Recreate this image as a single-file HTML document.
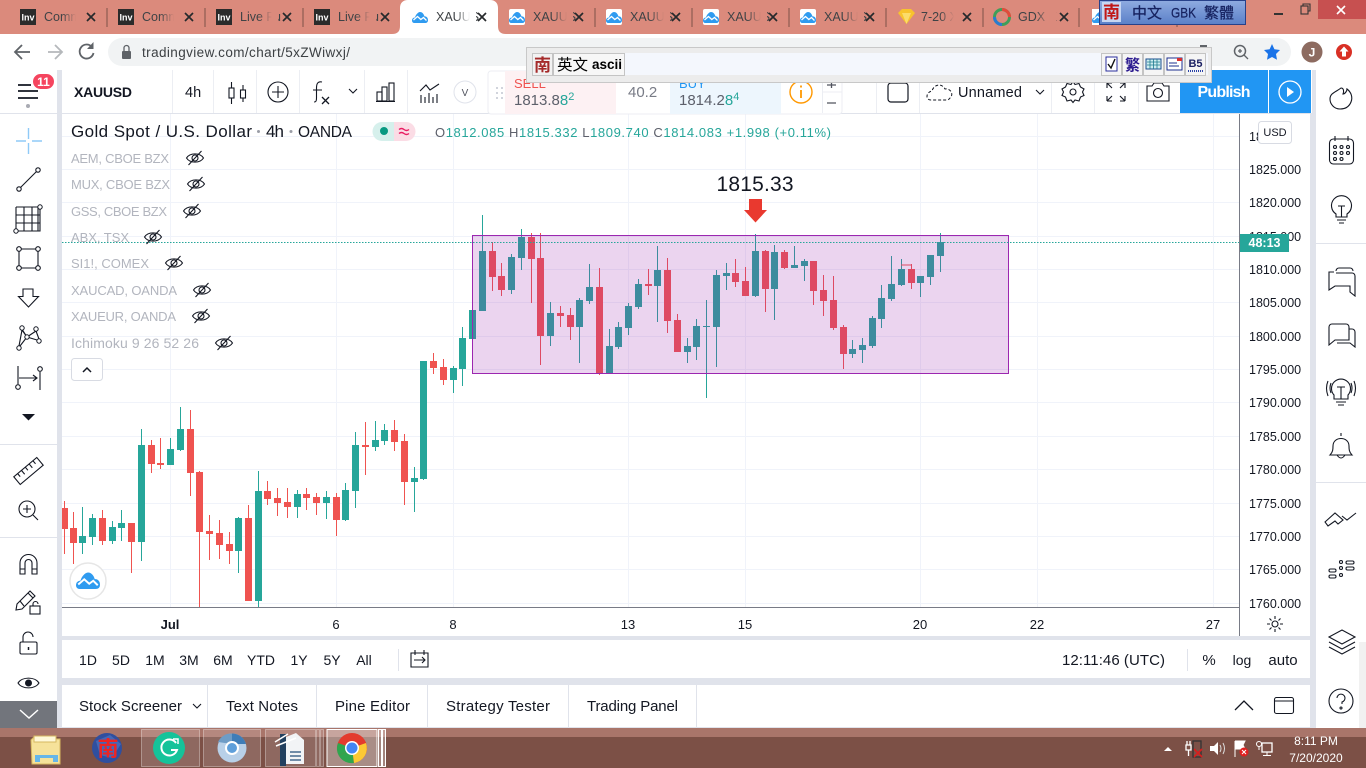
<!DOCTYPE html>
<html><head><meta charset="utf-8"><title>XAUUSD</title>
<style>
html,body{margin:0;padding:0;background:#fff;overflow:hidden;width:1366px;height:768px}
svg{display:block}
text{font-family:"Liberation Sans","Noto Sans CJK SC",sans-serif}
.t{font-size:12.5px;fill:#3f4346}
.h{font-size:13px;fill:#b2b5be}
.p{font-size:12.5px;fill:#131722}
.d{font-size:13px;fill:#131722;text-anchor:middle}
.tf{font-size:14px;fill:#131722;text-anchor:middle}
.k{font-size:15px;fill:#131722}
.c{fill:none;stroke:#131722;stroke-width:1.1}
</style></head><body>
<svg width="1366" height="768" viewBox="0 0 1366 768" xmlns="http://www.w3.org/2000/svg">
<defs>
<linearGradient id="fade"><stop offset="0" stop-color="#db8a7c" stop-opacity="0"/><stop offset=".7" stop-color="#db8a7c"/><stop offset="1" stop-color="#db8a7c"/></linearGradient>
<linearGradient id="fadew"><stop offset="0" stop-color="#fff" stop-opacity="0"/><stop offset=".7" stop-color="#fff"/><stop offset="1" stop-color="#fff"/></linearGradient>
<linearGradient id="ime" x1="0" y1="0" x2="0" y2="1"><stop offset="0" stop-color="#8fabe0"/><stop offset="1" stop-color="#5a80c8"/></linearGradient>
<clipPath id="ch"><rect x="62" y="114" width="1177" height="493"/></clipPath>
<g id="inv"><rect width="16" height="16" fill="#2b2b2b"/><text x="8" y="11.500" font-size="9" font-weight="700" fill="#fff" text-anchor="middle">Inv</text></g>
<g id="tv"><path d="M0 11.5C0 9 2 8.5 3 8.5 3.500 6 6 3 8 3 10.500 3 12 5.500 12.500 7.500 14 7 16 8.500 16 11 16 13 15 14 13 14H2.500C1 14 0 13 0 11.500Z" fill="#2f9bf0"/><path d="M1.500 11 5.500 7.500 8.800 10.500 11.500 8.500 14.500 11.500" fill="none" stroke="#fff" stroke-width="1.300"/></g>
<g id="x"><path d="M-4-4 4 4M4-4-4 4" stroke="#26292c" stroke-width="1.700"/></g>
<g id="eye"><path d="M-8.500 0C-5-5.500 5-5.500 8.500 0 5 5.500-5 5.500-8.500 0Z" class="c"/><circle r="3" class="c"/><path d="M-6.500 7 6.500-7" class="c"/></g>
</defs>

<!-- browser chrome -->
<rect width="1366" height="34" fill="#db8a7c"/>
<rect y="34" width="1366" height="36" fill="#fff"/>
<path d="M392 34C398 34 400 31 400 26V8C400 3 403 0 408 0H490C495 0 498 3 498 8V26C498 31 500 34 506 34Z" fill="#fff"/>

<use href="#inv" x="20" y="9"/><text class="t" x="44" y="21">Comm</text><rect x="62" y="10" width="20" height="16" fill="url(#fade)"/><use href="#x" x="91" y="17"/>
<path d="M107 8V27M205 8V27M303 8V27M595 8V27M692 8V27M789 8V27M886 8V27M983 8V27M1079 8V27M1177 8V27" stroke="#7d5148"/>
<use href="#inv" x="118" y="9"/><text class="t" x="142" y="21">Comm</text><rect x="160" y="10" width="20" height="16" fill="url(#fade)"/><use href="#x" x="189" y="17"/>
<use href="#inv" x="216" y="9"/><text class="t" x="240" y="21">Live Fu</text><rect x="258" y="10" width="20" height="16" fill="url(#fade)"/><use href="#x" x="287" y="17"/>
<use href="#inv" x="314" y="9"/><text class="t" x="338" y="21">Live Fu</text><rect x="356" y="10" width="20" height="16" fill="url(#fade)"/><use href="#x" x="385" y="17"/>
<use href="#tv" x="412" y="9"/><text class="t" x="436" y="21">XAUUS</text><rect x="456" y="10" width="20" height="16" fill="url(#fadew)"/><use href="#x" x="482" y="17"/>

<rect x="509" y="9" width="16" height="16" rx="2" fill="#fff"/><use href="#tv" x="509" y="9"/><text class="t" x="533" y="21">XAUUS</text><rect x="553" y="10" width="20" height="16" fill="url(#fade)"/><use href="#x" x="579" y="17"/>
<rect x="606" y="9" width="16" height="16" rx="2" fill="#fff"/><use href="#tv" x="606" y="9"/><text class="t" x="630" y="21">XAUUS</text><rect x="650" y="10" width="20" height="16" fill="url(#fade)"/><use href="#x" x="676" y="17"/>
<rect x="703" y="9" width="16" height="16" rx="2" fill="#fff"/><use href="#tv" x="703" y="9"/><text class="t" x="727" y="21">XAUUS</text><rect x="747" y="10" width="20" height="16" fill="url(#fade)"/><use href="#x" x="773" y="17"/>
<rect x="800" y="9" width="16" height="16" rx="2" fill="#fff"/><use href="#tv" x="800" y="9"/><text class="t" x="824" y="21">XAUUS</text><rect x="844" y="10" width="20" height="16" fill="url(#fade)"/><use href="#x" x="870" y="17"/>
<path d="M898 13 902 9H911L915 13 906.500 24Z" fill="#f8c32c"/><path d="M902 13H911L906.500 24Z" fill="#fbdc6a"/>
<text class="t" x="921" y="21">7-20 X</text><rect x="940" y="10" width="20" height="16" fill="url(#fade)"/><use href="#x" x="967" y="17"/>
<circle cx="1002" cy="17" r="7.500" fill="none" stroke="#3f9e5a" stroke-width="3"/><path d="M1002 9.500A7.500 7.500 0 0 1 1009.500 17" fill="none" stroke="#e24b3b" stroke-width="3"/><path d="M1002 24.500A7.500 7.500 0 0 1 994.500 17" fill="none" stroke="#2b7bd0" stroke-width="3"/>
<text class="t" x="1018" y="21">GDX E</text><rect x="1036" y="10" width="20" height="16" fill="url(#fade)"/><use href="#x" x="1064" y="17"/>
<rect x="1092" y="9" width="10" height="16" fill="#fff"/><use href="#tv" x="1092" y="9"/>

<!-- window controls -->
<rect x="1318" y="0" width="48" height="19" fill="#c75050"/>
<path d="M1337 6 1345 14M1345 6 1337 14" stroke="#fff" stroke-width="1.600"/>
<rect x="1274" y="13" width="9" height="2" fill="#333"/>
<rect x="1301" y="6" width="7" height="8" fill="none" stroke="#333" stroke-width="1.100"/><path d="M1303 6V4H1310V11H1308" fill="none" stroke="#333" stroke-width="1.100"/>

<!-- IME status -->
<rect x="1099.500" y=".5" width="146" height="24" fill="url(#ime)" stroke="#27418a"/>
<rect x="1102" y="2" width="19" height="20" fill="#c6d6f2"/>
<text x="1111.500" y="18" font-size="17" font-weight="700" fill="#c01818" text-anchor="middle">南</text>
<text x="1132" y="18" font-size="15" fill="#16225f" stroke="#16225f" stroke-width=".25">中文</text>
<text x="1171" y="17.500" font-size="14" fill="#16225f" textLength="25" lengthAdjust="spacingAndGlyphs" stroke="#16225f" stroke-width=".25">GBK</text>
<text x="1204" y="18" font-size="15" fill="#16225f" stroke="#16225f" stroke-width=".25">繁體</text>

<!-- nav -->
<path d="M30 52H16M22 45 15 52 22 59" fill="none" stroke="#5f6368" stroke-width="1.800"/>
<path d="M62 52H48M55 45 62 52 55 59" fill="none" stroke="#b5b8bb" stroke-width="1.800"/>
<path d="M92 47A7 7 0 1 0 93.500 53" fill="none" stroke="#5f6368" stroke-width="1.800"/><path d="M93.500 42V49H87Z" fill="#5f6368"/>
<rect x="108" y="38" width="1183" height="28" rx="14" fill="#f1f3f4"/>
<rect x="122" y="51" width="9" height="8" rx="1" fill="#5f6368"/><path d="M124 51V48A2.500 2.500 0 0 1 129 48V51" fill="none" stroke="#5f6368" stroke-width="1.300"/>
<text x="142" y="57" font-size="13.500" fill="#3c4043" textLength="208">tradingview.com/chart/5xZWiwxj/</text>
<rect x="1200" y="45" width="7" height="2" fill="#5f6368"/>
<circle cx="1240" cy="51" r="5.500" fill="none" stroke="#5f6368" stroke-width="1.500"/><path d="M1244 55 1248 59M1238 51H1242M1240 49V53" stroke="#5f6368" stroke-width="1.300"/>
<path d="M1272 44 1274.400 49.300 1280 50 1276 54 1277 59.800 1272 57 1267 59.800 1268 54 1264 50 1269.600 49.300Z" fill="#1a73e8"/>
<circle cx="1312" cy="52" r="10.500" fill="#8d6b60"/><text x="1312" y="56.500" font-size="12" font-weight="700" fill="#fff" text-anchor="middle">J</text>
<circle cx="1344" cy="52" r="8" fill="#d93025"/><path d="M1344 46.500 1348.500 51.500H1346V56.500H1342V51.500H1339.500Z" fill="#fff"/>

<!-- app background -->
<rect y="70" width="1366" height="658" fill="#e0e3eb"/>
<rect x="0" y="70" width="57" height="631" fill="#fff"/>
<rect x="62" y="70" width="1250" height="43" fill="#fff"/>
<rect x="62" y="114" width="1248" height="522" fill="#fff"/>
<rect x="62" y="640" width="1248" height="38" fill="#fff"/>
<rect x="62" y="685" width="1248" height="42" fill="#fff"/>
<rect x="1316" y="70" width="50" height="658" fill="#fff"/>
<rect x="1359" y="642" width="7" height="86" fill="#f1f1f1"/>

<!-- chart grid -->
<path d="M62 136.500H1239M62 169.500H1239M62 202.500H1239M62 236.500H1239M62 269.500H1239M62 302.500H1239M62 336.500H1239M62 369.500H1239M62 402.500H1239M62 436.500H1239M62 469.500H1239M62 503.500H1239M62 536.500H1239M62 569.500H1239M62 603.500H1239M170.500 114V607M336.500 114V607M453.500 114V607M628.500 114V607M745.500 114V607M920.500 114V607M1037.500 114V607M1213.500 114V607" stroke="#f0f3fa" fill="none"/>

<!-- candles -->
<g clip-path="url(#ch)" shape-rendering="crispEdges" fill="none">
<path stroke="#26a69a" stroke-width="1" d="M462.500 327V386M472.500 310V339M482.500 215V311M511.500 254V294M521.500 229V270M550.500 302V346M579.500 298V363M589.500 264V304M609.500 329V373M618.500 322V349M628.500 303V335M638.500 279V309M657.500 246V322M687.500 338V363M696.500 319V360M706.500 300V398M716.500 270V367M726.500 263V290M755.500 234V297M774.500 245V320M794.500 246V268M804.500 259V281M852.500 340V358M862.500 338V363M872.500 316V348M881.500 285V328M891.500 256V301M901.500 259V286M920.500 276V297M930.500 255V285M940.500 233V272M82.500 507V554M92.500 514V545M112.500 521V544M121.500 510V541M141.500 429V561M170.500 438V465M180.500 407V451M238.500 517V573M258.500 471V607M297.500 490V518M326.500 491V519M345.500 483V521M355.500 432V508M375.500 421V451M384.500 424V445M414.500 467V512M423.500 361V480M453.500 366V393"/>
<path stroke="#26a69a" stroke-width="7" d="M462.500 338V369M472.500 310V339M482.500 251V311M511.500 257V290M521.500 237V258M550.500 313V336M579.500 300V327M589.500 287V301M609.500 346V373M618.500 327V347M628.500 306V328M638.500 284V307M657.500 270V286M687.500 346V352M696.500 326V347M706.500 326V327M716.500 275V327M726.500 273V276M755.500 251V296M774.500 252V289M794.500 265V268M804.500 261V266M852.500 349V354M862.500 345V350M872.500 318V346M881.500 298V319M891.500 284V299M901.500 269V285M920.500 276V283M930.500 255V277M940.500 242V256M82.500 536V543M92.500 518V537M112.500 527V541M121.500 523V528M141.500 445V542M170.500 449V465M180.500 429V450M238.500 518V551M258.500 491V601M297.500 494V507M326.500 497V503M345.500 490V520M355.500 445V491M375.500 440V447M384.500 430V441M414.500 478V482M423.500 361V479M453.500 368V380"/>
<path stroke="#ef5350" stroke-width="1" d="M64.500 501V554M73.500 512V564M102.500 510V545M131.500 523V573M151.500 440V473M160.500 438V469M190.500 410V496M199.500 471V607M209.500 515V560M219.500 520V559M229.500 532V564M248.500 505V601M267.500 481V505M277.500 488V516M287.500 488V518M306.500 488V510M316.500 493V515M336.500 493V536M365.500 422V475M394.500 420V451M404.500 434V505M433.500 353V374M443.500 359V385M492.500 242V291M501.500 263V296M531.500 233V303M540.500 233V365M560.500 306V327M570.500 308V340M599.500 268V375M648.500 269V295M667.500 258V333M677.500 314V352M735.500 259V287M745.500 267V296M765.500 250V312M784.500 250V269M813.500 261V305M823.500 275V316M833.500 276V330M843.500 325V369M911.500 264V289"/>
<path stroke="#ef5350" stroke-width="7" d="M64.500 508V529M73.500 528V543M102.500 518V541M131.500 523V542M151.500 445V464M160.500 463V465M190.500 429V473M199.500 472V532M209.500 531V534M219.500 533V545M229.500 544V551M248.500 518V601M267.500 491V499M277.500 498V503M287.500 502V507M306.500 494V498M316.500 497V503M336.500 497V520M365.500 445V447M394.500 430V442M404.500 441V482M433.500 361V368M443.500 367V380M492.500 251V277M501.500 276V290M531.500 237V259M540.500 258V336M560.500 313V316M570.500 315V327M599.500 287V374M648.500 284V286M667.500 270V321M677.500 320V352M735.500 273V282M745.500 281V296M765.500 251V289M784.500 252V268M813.500 261V291M823.500 290V301M833.500 300V328M843.500 327V354M911.500 269V283"/>
<path d="M901 265H911" stroke="#ef5350"/>
</g>
<!-- box -->
<rect x="472.500" y="235.500" width="536" height="138" fill="#9c27b0" fill-opacity=".2" stroke="#9c27b0"/>
<path d="M62 242.500H1239" stroke="#26a69a" stroke-dasharray="1.500 1.500"/>
<!-- annotation -->
<text x="755" y="191" font-size="21" fill="#131722" text-anchor="middle" textLength="77">1815.33</text>
<path d="M749 199H762V210H767L755.500 222.500 744 210H749Z" fill="#e9392f"/>

<!-- price scale -->
<path d="M1239.500 114V636M62 607.500H1239" stroke="#787b86"/>
<g class="p"><text class="p" x="1249" y="174">1825.000</text><text class="p" x="1249" y="207">1820.000</text><text class="p" x="1249" y="241">1815.000</text><text class="p" x="1249" y="274">1810.000</text><text class="p" x="1249" y="307">1805.000</text><text class="p" x="1249" y="341">1800.000</text><text class="p" x="1249" y="374">1795.000</text><text class="p" x="1249" y="407">1790.000</text><text class="p" x="1249" y="441">1785.000</text><text class="p" x="1249" y="474">1780.000</text><text class="p" x="1249" y="508">1775.000</text><text class="p" x="1249" y="541">1770.000</text><text class="p" x="1249" y="574">1765.000</text><text class="p" x="1249" y="608">1760.000</text><text class="p" x="1249" y="141">18</text></g>
<rect x="1240" y="234" width="49" height="18" fill="#26a69a"/>
<text x="1264.500" y="247" font-size="12.500" font-weight="700" fill="#fff" text-anchor="middle">48:13</text>
<rect x="1258.500" y="121.500" width="33" height="22" rx="3" fill="#fff" stroke="#d8dbe3"/>
<text x="1275" y="136" font-size="11" fill="#131722" text-anchor="middle">USD</text>

<!-- legend -->
<text x="71" y="137" font-size="17" fill="#131722" textLength="181">Gold Spot / U.S. Dollar</text>
<circle cx="258.500" cy="131.500" r="1.500" fill="#9a9da6"/>
<text x="266" y="137" font-size="17" fill="#131722" textLength="18">4h</text>
<circle cx="291" cy="131.500" r="1.500" fill="#9a9da6"/>
<text x="298" y="137" font-size="15.500" fill="#131722" textLength="54">OANDA</text>
<path d="M382 122H394V141H382A9.500 9.500 0 0 1 382 122Z" fill="#d6f0ec"/><path d="M394 122H406A9.500 9.500 0 0 1 406 141H394Z" fill="#fbdce5"/>
<circle cx="384" cy="131" r="4" fill="#089981"/>
<path d="M399 129.500Q401.500 127.500 404 129.500T409 129.500M399 133.500Q401.500 131.500 404 133.500T409 133.500" fill="none" stroke="#e91e63" stroke-width="1.400"/>
<text x="435" y="137" font-size="13" fill="#26a69a" textLength="396"><tspan fill="#5d606b">O</tspan>1812.085 <tspan fill="#5d606b">H</tspan>1815.332 <tspan fill="#5d606b">L</tspan>1809.740 <tspan fill="#5d606b">C</tspan>1814.083 +1.998 (+0.11%)</text>
<text class="h" x="71" y="163" textLength="98">AEM, CBOE BZX</text><use href="#eye" x="195" y="158"/>
<text class="h" x="71" y="189" textLength="99">MUX, CBOE BZX</text><use href="#eye" x="196" y="184"/>
<text class="h" x="71" y="216" textLength="96">GSS, CBOE BZX</text><use href="#eye" x="192" y="211"/>
<text class="h" x="71" y="242" textLength="58">ABX, TSX</text><use href="#eye" x="153" y="237"/>
<text class="h" x="71" y="268" textLength="78">SI1!, COMEX</text><use href="#eye" x="174" y="263"/>
<text class="h" x="71" y="295" textLength="106">XAUCAD, OANDA</text><use href="#eye" x="202" y="290"/>
<text class="h" x="71" y="321" textLength="105">XAUEUR, OANDA</text><use href="#eye" x="201" y="316"/>
<text class="h" x="71" y="348" style="font-size:14px" textLength="128">Ichimoku 9 26 52 26</text><use href="#eye" x="224" y="343"/>
<rect x="71.500" y="358.500" width="31" height="22" rx="3" fill="#fff" stroke="#d8dbe3"/>
<path d="M83 372 87 368 91 372" fill="none" stroke="#131722" stroke-width="1.500"/>

<!-- watermark -->
<circle cx="88" cy="581" r="18" fill="#fff" stroke="#e6e6e6" stroke-width="1.500"/>
<g transform="translate(76 571) scale(1.500)"><use href="#tv" y="-2"/></g>

<!-- date axis -->
<text class="d" x="170" y="629" font-weight="700">Jul</text><text class="d" x="336" y="629">6</text><text class="d" x="453" y="629">8</text><text class="d" x="628" y="629">13</text><text class="d" x="745" y="629">15</text><text class="d" x="920" y="629">20</text><text class="d" x="1037" y="629">22</text><text class="d" x="1213" y="629">27</text>
<circle cx="1275" cy="624" r="3" class="c"/><path d="M1275 616V619M1275 629V632M1267 624H1270M1280 624H1283M1269.500 618.500 1271.500 620.500M1278.500 627.500 1280.500 629.500M1280.500 618.500 1278.500 620.500M1271.500 627.500 1269.500 629.500" class="c"/>

<!-- timeframes -->
<g><text class="tf" x="88" y="665">1D</text><text class="tf" x="121" y="665">5D</text><text class="tf" x="155" y="665">1M</text><text class="tf" x="189" y="665">3M</text><text class="tf" x="223" y="665">6M</text><text class="tf" x="261" y="665">YTD</text><text class="tf" x="299" y="665">1Y</text><text class="tf" x="332" y="665">5Y</text><text class="tf" x="364" y="665">All</text></g>
<path d="M398.500 649V671M1187.500 649V671" stroke="#e0e3eb"/>
<path d="M411 653H428V667H411ZM415 650V655M424 650V655M414 660H425M422 657 425 660 422 663" class="c"/>
<text x="1062" y="665" font-size="15" fill="#131722" textLength="103">12:11:46 (UTC)</text>
<text class="tf" x="1209" y="665" style="font-size:15px">%</text><text class="tf" x="1242" y="665">log</text><text class="tf" x="1283" y="665" style="font-size:15px">auto</text>

<!-- bottom panel tabs -->
<path d="M207.500 685V727M316.500 685V727M427.500 685V727M568.500 685V727M696.500 685V727" stroke="#e0e3eb"/>
<text class="k" x="79" y="711" textLength="103">Stock Screener</text><path d="M193 704 197 708 201 704" class="c"/>
<text class="k" x="226" y="711" textLength="72">Text Notes</text>
<text class="k" x="335" y="711" textLength="75">Pine Editor</text>
<text class="k" x="446" y="711" textLength="104">Strategy Tester</text>
<text class="k" x="587" y="711" textLength="91">Trading Panel</text>
<path d="M1235 710 1244 701 1253 710" fill="none" stroke="#131722" stroke-width="1.300"/>
<rect x="1274.500" y="697.500" width="19" height="16" rx="2" class="c"/><path d="M1275 701H1293" class="c"/>

<!-- top toolbar -->
<path d="M172.500 70V113M213.500 70V113M256.500 70V113M299.500 70V113M364.500 70V113M407.500 70V113M876.500 70V113M919.500 70V113M1051.500 70V113M1094.500 70V113M1138.500 70V113" stroke="#eceef3"/>
<path d="M0 113.500H57M62 113.500H1310" stroke="#e0e3eb"/>
<text x="74" y="97" font-size="14" font-weight="700" fill="#131722" textLength="58">XAUUSD</text>
<text x="185" y="97" font-size="14.500" fill="#131722">4h</text>
<path d="M231.500 82V88M231.500 98V104M243 85V90M243 98V102" class="c"/><rect x="229" y="88" width="5" height="10" class="c"/><rect x="240.500" y="90" width="5" height="8" class="c"/>
<circle cx="278" cy="92" r="10" class="c"/><path d="M278 86V98M272 92H284" class="c"/>
<path d="M322 82C317 81 316.500 85 316.500 88V98C316.500 101 316 102 314 102M313 90H322" class="c"/><path d="M322 97 329 104M329 97 322 104" stroke="#131722" stroke-width="1.300"/>
<path d="M349 89 353 93 357 89" class="c"/>
<rect x="377" y="92" width="5" height="9" class="c"/><rect x="382" y="87" width="5" height="14" class="c"/><rect x="389" y="83" width="5" height="18" class="c"/><path d="M376 101.500H395" class="c"/>
<path d="M420 91 426 85 430 90 439 84M421 103V95M425 103V97M429 103V93M433 103V97M437 103V94" class="c"/>
<circle cx="465" cy="92" r="11" fill="#fff" stroke="#e0e3eb"/><text x="465" y="96" font-size="10" fill="#50535e" text-anchor="middle">V</text>
<!-- hamburger -->
<path d="M18 85H31M18 91H38M18 98H38" stroke="#131722" stroke-width="1.800"/><circle cx="28" cy="106" r="2" fill="#a9abb3"/>
<rect x="33" y="74" width="21" height="15" rx="7.500" fill="#f5455f"/><text x="43.500" y="86" font-size="12" font-weight="700" fill="#fff" text-anchor="middle">11</text>

<!-- trade box -->
<rect x="488" y="71" width="354" height="43" rx="3" fill="#fff" stroke="#eceef3"/>
<rect x="505" y="71" width="111" height="43" fill="#fdf1f3"/><rect x="670" y="71" width="111" height="43" fill="#edf6fd"/>
<path d="M496 88H498M501 88H503M496 93H498M501 93H503M496 98H498M501 98H503" stroke="#d1d4dc" stroke-width="2"/>
<text x="514" y="88" font-size="13" fill="#ef5350">SELL</text>
<text x="514" y="105" font-size="15" fill="#5d606b">1813.8<tspan fill="#26a69a">8</tspan><tspan fill="#26a69a" font-size="11" dy="-5">2</tspan></text>
<text x="628" y="97" font-size="15" fill="#787b86">40.2</text>
<text x="679" y="88" font-size="13" fill="#2196f3">BUY</text>
<text x="679" y="105" font-size="15" fill="#5d606b">1814.2<tspan fill="#26a69a">8</tspan><tspan fill="#26a69a" font-size="11" dy="-5">4</tspan></text>
<circle cx="801" cy="92" r="11" fill="none" stroke="#ff9800" stroke-width="1.400"/><path d="M801 90V98M801 85.500V87.500" stroke="#ff9800" stroke-width="1.800"/>
<path d="M822.500 71V113M823 92H842" stroke="#eceef3"/><path d="M827 103H836M827 85H836M831.500 83V88" stroke="#50535e" stroke-width="1.300"/>

<rect x="888" y="83" width="20" height="19" rx="3" fill="none" stroke="#131722" stroke-width="1.200"/>
<path d="M931 100C925 100 926 92 932 91 934 84 942 83 945 89 951 88 954 95 950 98 949 99.500 948 100 946 100Z" fill="none" stroke="#131722" stroke-dasharray="3 2"/>
<text x="958" y="97" font-size="14.500" fill="#131722" textLength="64">Unnamed</text>
<path d="M1036 90 1040 94 1044 90" class="c"/>
<path d="M1073 81.500 1075 84.500 1079 83.500 1080.500 87 1084 89 1082.500 92 1084 95.500 1080.500 97 1079 101 1075 100 1073 102.500 1071 100 1067 101 1065.500 97 1062 95.500 1063.500 92 1062 89 1065.500 87 1067 83.500 1071 84.500Z" class="c"/><circle cx="1073" cy="92" r="3" class="c"/>
<path d="M1107 83H1112M1107 83V88M1107 83 1112 88M1125 83H1120M1125 83V88M1125 83 1120 88M1107 101H1112M1107 101V96M1107 101 1112 96M1125 101H1120M1125 101V96M1125 101 1120 96" class="c"/>
<path d="M1147 86H1152L1154 83H1162L1164 86H1169V101H1147Z" class="c"/><circle cx="1158" cy="93" r="4.500" class="c"/>
<rect x="1180" y="70" width="88" height="43" fill="#2196f3"/><rect x="1269" y="70" width="42" height="43" fill="#2196f3"/>
<text x="1224" y="97" font-size="16" font-weight="700" fill="#fff" text-anchor="middle" textLength="53">Publish</text>
<circle cx="1290" cy="92" r="11" fill="none" stroke="#fff" stroke-width="1.300"/><path d="M1287 87 1294 92 1287 97Z" fill="#fff"/>

<!-- IME bar -->
<rect x="526.500" y="47.500" width="685" height="35" fill="#ececec" stroke="#c8c8c8"/>
<rect x="532" y="53" width="676" height="22" fill="#f4f7fd"/>
<rect x="532.500" y="53.500" width="20" height="22" fill="#f2f2f2" stroke="#c4c4c4"/>
<text x="542.500" y="71" font-size="17" font-weight="700" fill="#a52a2a" text-anchor="middle">南</text>
<rect x="553.500" y="53.500" width="71" height="22" fill="#f7f7f7" stroke="#c4c4c4"/>
<text x="557" y="70" font-size="15.500" fill="#000">英文</text><text x="592" y="69" font-size="13.500" font-weight="700" fill="#000">ascii</text>
<g stroke="#c4c4c4" fill="#f5f5f5"><rect x="1101.500" y="53.500" width="20" height="22"/><rect x="1122.500" y="53.500" width="20" height="22"/><rect x="1143.500" y="53.500" width="20" height="22"/><rect x="1164.500" y="53.500" width="20" height="22"/><rect x="1185.500" y="53.500" width="20" height="22"/></g>
<rect x="1106" y="57" width="11" height="14" fill="#fff" stroke="#2b2f9e"/><path d="M1108 64 1111 68 1115 59" fill="none" stroke="#111" stroke-width="1.400"/>
<text x="1132.500" y="70" font-size="15" font-weight="700" fill="#2b1a8f" text-anchor="middle">繁</text>
<rect x="1146" y="59" width="15" height="10" fill="#cfeef0" stroke="#1d4f8f"/><path d="M1147 62H1160M1147 65H1160M1150 59V69M1153.500 59V69M1157 59V69" stroke="#1f7b8f" stroke-width=".8"/>
<rect x="1167" y="58" width="15" height="12" fill="#fff" stroke="#1d2f8f"/><rect x="1177" y="58" width="5" height="3" fill="#d83030"/><path d="M1169 63H1177M1169 66H1179" stroke="#1d2f8f"/>
<text x="1195.500" y="67" font-size="11" font-weight="700" fill="#1d2264" text-anchor="middle">B5</text><path d="M1188 71H1203" stroke="#2c44a8" stroke-width="2" stroke-dasharray="1 1"/>

<!-- left toolbar icons -->
<path d="M0 113.500H57M0 444.500H57M0 537.500H57" stroke="#e0e3eb"/>
<path d="M28.500 128V139M28.500 143V154M16 141H26M32 141H42" stroke="#8fcaf7" stroke-width="1.400"/>
<path d="M20.500 187.500 36.500 171.500" class="c"/><circle cx="19" cy="189" r="2.200" class="c"/><circle cx="38" cy="170" r="2.200" class="c"/>
<path d="M16 207H38V231M18 231H40V209M16 207V229M24 207V231M32 207V231M16 215H40M16 223H40" class="c"/><circle cx="40" cy="207" r="2.200" fill="#fff" stroke="#131722"/><circle cx="16" cy="231" r="2.200" fill="#fff" stroke="#131722"/>
<path d="M21 249H36M21 268H36M19 251V266M38 251V266" class="c"/><circle cx="19" cy="249" r="2.300" class="c"/><circle cx="38" cy="249" r="2.300" class="c"/><circle cx="19" cy="268" r="2.300" class="c"/><circle cx="38" cy="268" r="2.300" class="c"/>
<path d="M23 289H33V296.500H38.500L28.500 307 18.500 296.500H23Z" class="c"/>
<path d="M20 346 27 337 22 330 19 346M27 337 36 331 39 339M27 337 37 340M22.500 330 27 337" class="c"/><circle cx="22" cy="328" r="2.200" fill="#fff" stroke="#131722"/><circle cx="36" cy="329" r="2.200" fill="#fff" stroke="#131722"/><circle cx="27" cy="337" r="2.200" fill="#fff" stroke="#131722"/><circle cx="39" cy="341" r="2.200" fill="#fff" stroke="#131722"/><circle cx="19" cy="348" r="2.200" fill="#fff" stroke="#131722"/>
<path d="M18 366V384M40 372V390M19 378H37M33 375 37 378 33 381" class="c"/><circle cx="18" cy="387" r="2.300" class="c"/><circle cx="40" cy="369" r="2.300" class="c"/>
<path d="M22 414H35L28.500 420.500Z" fill="#131722"/>
<g transform="translate(28.500 471) rotate(-40)"><rect x="-15" y="-5" width="30" height="10" class="c"/><path d="M-10-5V-1M-5-5V0M0-5V-1M5-5V0M10-5V-1" class="c"/></g>
<circle cx="27" cy="509" r="8" class="c"/><path d="M27 505V513M23 509H31M33 515 38 520" class="c"/>
<path d="M20 574V563A8.500 8.500 0 0 1 37 563V574H32V563A3.500 3.500 0 0 0 25 563V574ZM20 569H25M32 569H37" class="c"/>
<path d="M17 604 30 591 35 596 22 609 16 610ZM28 593 33 598M20 601 24 606" class="c"/><rect x="30" y="606" width="10" height="8" class="c"/><path d="M33 606V604A2.500 2.500 0 0 1 38 604" class="c"/>
<rect x="20" y="642" width="17" height="12" rx="1.500" class="c"/><path d="M23 642V637A5 5 0 0 1 33 637" class="c"/><path d="M28.500 647V650" stroke="#131722" stroke-width="1.500"/>
<path d="M18 683C22 676.500 35 676.500 39 683 35 689.500 22 689.500 18 683Z" class="c"/><circle cx="28.500" cy="683" r="3.500" fill="#131722"/>
<rect y="701" width="57" height="27" fill="#72757c"/><path d="M20 710 29 718 38 710" fill="none" stroke="#fff" stroke-width="1.500"/>

<!-- right toolbar -->
<path d="M1316 243.500H1366M1316 482.500H1366" stroke="#e0e3eb"/>
<path d="M1341 88C1344 88 1344 92 1343 94 1345 94 1347 91 1347 89 1351 92 1353 97 1351 102 1349 107 1345 109 1340 109 1334 109 1330 104 1330 99 1330 93 1336 92 1341 88Z" class="c"/>
<rect x="1329.500" y="139" width="24" height="25" rx="4" class="c"/><path d="M1335 136V141M1348 136V141" class="c"/><g class="c"><circle cx="1335" cy="147" r="1.500"/><circle cx="1341.500" cy="147" r="1.500"/><circle cx="1348" cy="147" r="1.500"/><circle cx="1335" cy="153" r="1.500"/><circle cx="1341.500" cy="153" r="1.500"/><circle cx="1348" cy="153" r="1.500"/><circle cx="1335" cy="159" r="1.500"/><circle cx="1341.500" cy="159" r="1.500"/></g>
<path d="M1336 214A10 10 0 1 1 1347 214V217H1336ZM1338 206H1345M1341.500 206V217M1337 220H1346M1339 223H1344" class="c"/>
<path d="M1334 272H1329V290L1335 286H1350V292L1355 296V276A3 3 0 0 0 1352 273H1336M1336 271A3 3 0 0 1 1339 268H1350A3 3 0 0 1 1353 271" class="c"/>
<path d="M1329 327A3 3 0 0 1 1332 324H1346A3 3 0 0 1 1349 327V340H1335L1329 345ZM1349 329H1352A3 3 0 0 1 1355 332V347L1350 343H1337" class="c"/>
<path d="M1334 395A9.500 9.500 0 1 1 1348 395V399H1334ZM1337 387H1345M1341 387V399M1336 402H1346M1338 405H1344M1328 381Q1325 388 1328 396M1331 383Q1329 388 1331 393M1354 381Q1357 388 1354 396M1351 383Q1353 388 1351 393" class="c"/>
<path d="M1330 455C1333 452 1333 449 1333 446 1333 436 1349 436 1349 446 1349 449 1349 452 1352 455ZM1341 436V433M1337 455Q1341 461 1345 455" class="c"/>
<path d="M1325 522 1335 513 1343 520 1338 524 1335 521 1328 526ZM1342 516 1347 520 1356 513" class="c"/>
<g class="c"><rect x="1329" y="575" width="7" height="3" rx="1.500"/><rect x="1329" y="569" width="7" height="3" rx="1.500"/><circle cx="1341" cy="562" r="1.500"/><circle cx="1341" cy="568" r="1.500"/><circle cx="1341" cy="575" r="1.500"/><rect x="1346" y="561" width="8" height="3" rx="1.500"/><rect x="1346" y="567" width="8" height="3" rx="1.500"/></g>
<path d="M1329 637 1342 630 1355 637 1342 644ZM1329 642 1342 649 1355 642M1329 647 1342 654 1355 647" class="c"/>
<circle cx="1341" cy="701" r="12" class="c"/><path d="M1337 698A4 4 0 1 1 1342 702V704" class="c"/><circle cx="1341" cy="708" r="1" class="c"/>

<!-- taskbar -->
<rect y="728" width="1366" height="40" fill="#7c5046"/>
<rect y="728" width="1366" height="9" fill="#a9756a"/>
<rect x="1317" y="725" width="42" height="3" fill="#fff"/>
<path d="M31 740 34 737H42L44 739H60V764H32Z" fill="#f6e29a" stroke="#d6b860"/>
<rect x="34" y="736" width="22" height="6" fill="#fff8d8" stroke="#d6b860"/>
<path d="M35 762V755H58V762H53V758H40V762Z" fill="#66b6e8"/>
<circle cx="107" cy="748" r="15" fill="#2f4f9f"/><path d="M96 741 110 735 121 744 112 758 100 755Z" fill="#4468b6"/>
<text x="108" y="756" font-size="21" font-weight="700" fill="#ea2525" text-anchor="middle">南</text>
<g fill="#fff" fill-opacity=".14" stroke="#fff" stroke-opacity=".35"><rect x="141.500" y="729.500" width="58" height="37"/><rect x="203.500" y="729.500" width="57" height="37"/><rect x="265.500" y="729.500" width="50" height="37"/><path d="M316.500 729.500H319.500V766.500H316.500ZM320.500 729.500H323.500V766.500H320.500Z"/></g>
<rect x="327" y="729.500" width="50" height="37" fill="#fff" fill-opacity=".35" stroke="#fff"/><path d="M378.500 729.500H381.500V766.500H378.500ZM382.500 729.500H385.500V766.500H382.500Z" fill="#fff" fill-opacity=".3" stroke="#fff"/>
<circle cx="169" cy="748" r="16" fill="#15c39a"/><path d="M176 743A8 8 0 1 0 177 750H171" fill="none" stroke="#fff" stroke-width="2"/><path d="M178 744V739H173" fill="none" stroke="#fff" stroke-width="1.500"/>
<circle cx="232" cy="748" r="14.500" fill="#b8d0e8"/><path d="M232 733.500A14.500 14.500 0 0 1 246 744H232Z" fill="#3f7db8"/><path d="M218 742A14.500 14.500 0 0 1 232 733.500L232 744Z" fill="#6e9cc6"/><circle cx="232" cy="748" r="6" fill="#5f9fda" stroke="#fff" stroke-width="2"/>
<path d="M280 734H286V766H280Z" fill="#22405f"/><path d="M286 737 296 733 304 740V764H286Z" fill="#f2f4f6"/><path d="M290 752H301M290 756H301M290 760H301" stroke="#456a8e" stroke-width="1.500"/><path d="M275 742 288 734M276 746 296 738" stroke="#fff" stroke-width="1.500"/>
<circle cx="352" cy="748" r="15" fill="#e33b2e"/><path d="M352 748 339 756A15 15 0 0 0 354 763Z" fill="#2fa64e"/><path d="M352 748 354 763A15 15 0 0 0 366 743Z" fill="#fcc934"/><path d="M352 748 338 743A15 15 0 0 0 339 756Z" fill="#2fa64e"/><circle cx="352" cy="748" r="7" fill="#fff"/><circle cx="352" cy="748" r="5.500" fill="#4285f4"/>
<!-- tray -->
<path d="M1164 751 1168 747 1172 751Z" fill="#fff"/>
<path d="M1187 741V745M1190 741V745M1186 745H1191V750H1186ZM1188.500 750V756" stroke="#fff" fill="none" stroke-width="1.300"/><rect x="1193" y="741" width="8" height="16" fill="none" stroke="#333" stroke-width="1.300"/><path d="M1194 749 1202 757M1202 749 1194 757" stroke="#d81e1e" stroke-width="1.600"/>
<path d="M1210 746H1214L1218 742V755L1214 751H1210Z" fill="#fff"/><path d="M1220 745Q1222 748.500 1220 752M1223 743Q1226 748.500 1223 754" fill="none" stroke="#ddd"/>
<path d="M1235 741V757M1235 741H1245L1243 745 1245 749H1235" fill="#fff" stroke="#fff"/><circle cx="1244" cy="752" r="4.500" fill="#e02020"/><path d="M1242 750 1246 754M1246 750 1242 754" stroke="#fff"/>
<circle cx="1259" cy="744" r="2.500" fill="none" stroke="#fff"/><path d="M1259 746.500V750" stroke="#fff"/><rect x="1262" y="743" width="10" height="9" fill="none" stroke="#fff" stroke-width="1.300"/><path d="M1267 752V755M1263 755.500H1271" stroke="#fff"/>
<text x="1316" y="745" font-size="12" fill="#fff" text-anchor="middle">8:11 PM</text>
<text x="1316" y="762" font-size="12" fill="#fff" text-anchor="middle">7/20/2020</text>
</svg>
</body></html>
